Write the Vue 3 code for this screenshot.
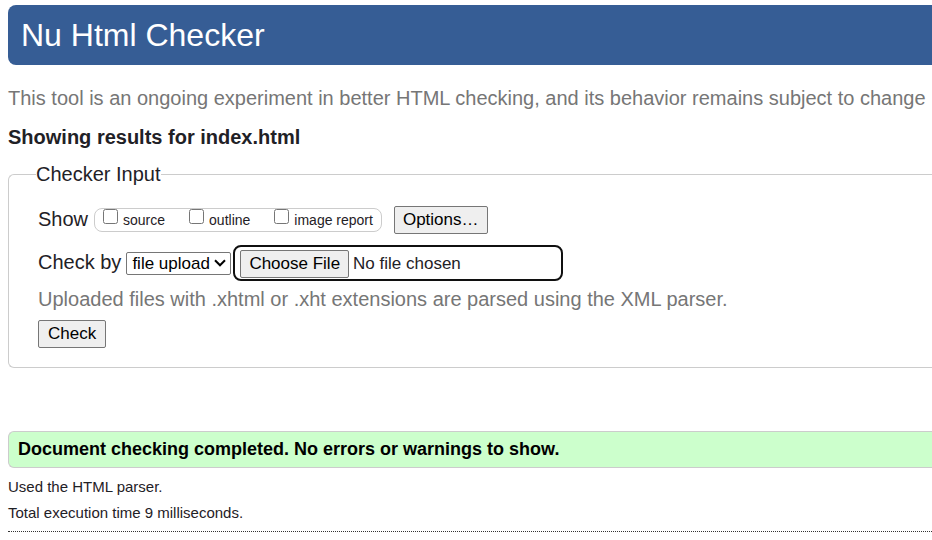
<script setup>
import { ref } from 'vue'

const views = ref([
  { id: 'show-source', label: 'source', checked: false },
  { id: 'show-outline', label: 'outline', checked: false },
  { id: 'show-image-report', label: 'image report', checked: false },
])
const method = ref('file')
</script>

<template>
  <div class="page">
    <header class="banner">
      <h1>Nu Html Checker</h1>
    </header>
    <main>
      <p class="tagline">This tool is an ongoing experiment in better HTML checking, and its behavior remains subject to change</p>
      <h2>Showing results for index.html</h2>

      <form @submit.prevent>
        <fieldset class="checker">
          <legend>Checker Input</legend>
          <div class="row">
            <span class="caption">Show</span>
            <div class="views" role="group" aria-label="Show">
              <label v-for="view in views" :key="view.id" :for="view.id">
                <input :id="view.id" v-model="view.checked" type="checkbox" />
                <span>{{ view.label }}</span>
              </label>
            </div>
            <button type="button" class="options">Options…</button>
          </div>
          <div class="row method">
            <label class="caption" for="method">Check by</label>
            <div class="picker">
              <select id="method" v-model="method">
                <option value="file">file upload</option>
              </select>
              <svg class="chevron" width="12" height="8" viewBox="0 0 12 8" aria-hidden="true">
                <path d="M1 1.3 6 6.3l5-5" fill="none" stroke="#000" stroke-width="2" />
              </svg>
            </div>
            <input class="file" type="file" aria-label="File to check" />
          </div>
          <p class="hint">Uploaded files with .xhtml or .xht extensions are parsed using the XML parser.</p>
          <button type="submit">Check</button>
        </fieldset>
      </form>

      <p class="success">Document checking completed. No errors or warnings to show.</p>
      <div class="details">
        <p>Used the HTML parser.</p>
        <p>Total execution time 9 milliseconds.</p>
      </div>
    </main>
  </div>
</template>

<style>
body {
  background: #fff;
}
</style>

<style scoped>
.page {
  padding: 5px 0 8px 8px;
  color: #1f2126;
  font-family: "Liberation Sans", Arial, sans-serif;
  font-size: 20px;
  line-height: 24px;
}

h1,
h2,
p {
  margin: 0;
}

.banner {
  padding: 10px 13px;
  border-radius: 8px 0 0 8px;
  background: #365d95;
  color: #fff;
}

h1 {
  font-size: 32px;
  font-weight: 400;
  line-height: 40px;
}

.tagline {
  margin-top: 21px;
  color: #767676;
  white-space: nowrap;
}

h2 {
  margin: 15px 0 13px;
  font-size: 20px;
  line-height: 24px;
}

.checker {
  min-width: 0;
  margin: 0;
  padding: 20px 28px 19px 29px;
  border: 1px solid #ccc;
  border-right: 0;
  border-radius: 6px 0 0 6px;
}

legend {
  margin-left: -2px;
  padding: 0;
}

.row {
  display: flex;
  align-items: center;
}

.caption {
  padding-bottom: 2px;
  white-space: nowrap;
}

.views {
  display: flex;
  gap: 24px;
  margin-left: 6px;
  padding: 0 8px;
  border: 1px solid #ccc;
  border-radius: 8px;
  font-size: 14px;
  line-height: 22px;
}

.views label {
  display: flex;
  align-items: flex-start;
  gap: 5px;
  white-space: nowrap;
}

.views input {
  width: 15px;
  height: 15px;
  margin: 0;
}

button,
.file::file-selector-button {
  height: 28px;
  padding: 0 9px;
  border: 1px solid #767676;
  border-radius: 2px;
  background: #efefef;
  color: #000;
  font-family: inherit;
  font-size: 17px;
  line-height: 24px;
}

.options,
.file::file-selector-button {
  padding: 0 8px;
}

.options {
  margin-left: 12px;
}

.method {
  margin-top: 11px;
}

.picker {
  display: grid;
  align-items: center;
  margin-left: 5px;
}

.picker > * {
  grid-area: 1 / 1;
}

.chevron {
  justify-self: end;
  margin-right: 5px;
  pointer-events: none;
}

select {
  appearance: none;
  width: 105px;
  height: 23px;
  padding: 0 5px;
  border: 1px solid #767676;
  border-radius: 2px;
  background-color: #fff;
  color: #000;
  font-family: inherit;
  font-size: 17px;
}

.file {
  box-sizing: border-box;
  width: 330px;
  height: 36px;
  margin-left: 2px;
  padding: 3px 5px 1px;
  border: 2px solid #101010;
  border-radius: 8px;
  font-family: inherit;
  font-size: 17px;
  line-height: 28px;
}

.hint {
  margin: 6px 0 9px;
  color: #767676;
}

.success {
  margin-top: 63px;
  padding: 5px 9px 6px;
  border: 1px solid #ccc;
  border-right: 0;
  border-radius: 6px 0 0 6px;
  background: #cfc;
  color: #000;
  font-size: 18px;
  font-weight: 700;
}

.details {
  display: grid;
  gap: 2px;
  padding: 7px 0 6px;
  border-bottom: 1px dotted #333;
  font-size: 15px;
}
</style>
